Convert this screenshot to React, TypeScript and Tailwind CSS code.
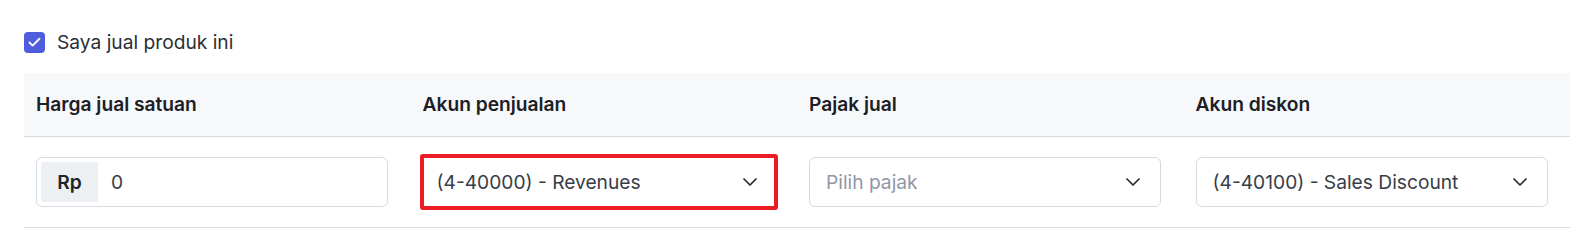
import { ChevronDown, Check } from "lucide-react";

const headers = ["Harga jual satuan", "Akun penjualan", "Pajak jual", "Akun diskon"];

function Select({ value, placeholder, highlight }: { value?: string; placeholder?: string; highlight?: boolean }) {
  return (
    <div className={highlight ? "w-[358px] -m-[3px] rounded-[3px] border-[4px] border-[#ec1c24] bg-white" : "w-[352px]"}>
      <div
        className={
          "flex items-center justify-between " +
          (highlight ? "h-[48px] pl-[13px] pr-[12px]" : "h-[50px] rounded-md border border-[#d6dae0] bg-white pl-[16px] pr-[15px]")
        }
      >
        {value ? (
          <span className="text-[19.2px] text-[#373d47]">{value}</span>
        ) : (
          <span className="text-[19.2px] text-[#8f98a6]">{placeholder}</span>
        )}
        <ChevronDown className="h-6 w-6 text-[#262b33]" strokeWidth={1.75} />
      </div>
    </div>
  );
}

export default function App() {
  return (
    <div className="min-h-[245px] bg-white px-6 pt-8 font-['Inter',sans-serif] text-[#1f2329]">
      <label className="flex h-[21px] items-center gap-3">
        <span className="flex h-[21px] w-[21px] items-center justify-center rounded-[4px] bg-[#4d5ddc]">
          <Check className="h-[15px] w-[15px] text-white" strokeWidth={3} />
        </span>
        <span className="text-[19.2px] text-[#2a2f37]">Saya jual produk ini</span>
      </label>

      <div className="mt-5 w-[1546px]">
        <div className="grid h-[64px] grid-cols-4 items-center border-b border-[#d8dce2] bg-[#f7f8fa]">
          {headers.map((h) => (
            <div key={h} className="px-3 text-[19.2px] font-semibold text-[#1c2026]">
              {h}
            </div>
          ))}
        </div>
        <div className="grid grid-cols-4 items-center border-b border-[#d8dce2] py-5">
          <div className="px-3">
            <div className="flex h-[50px] w-[352px] items-center rounded-md border border-[#d6dae0] bg-white p-1">
              <span className="flex h-full w-[57px] items-center justify-center rounded-l-[3px] bg-[#edf0f3] text-[19.2px] font-semibold text-[#1f242b]">
                Rp
              </span>
              <span className="pl-[13px] text-[19.2px] text-[#373d47]">0</span>
            </div>
          </div>
          <div className="px-3">
            <Select value="(4-40000) - Revenues" highlight />
          </div>
          <div className="px-3">
            <Select placeholder="Pilih pajak" />
          </div>
          <div className="px-3">
            <Select value="(4-40100) - Sales Discount" />
          </div>
        </div>
      </div>
    </div>
  );
}
